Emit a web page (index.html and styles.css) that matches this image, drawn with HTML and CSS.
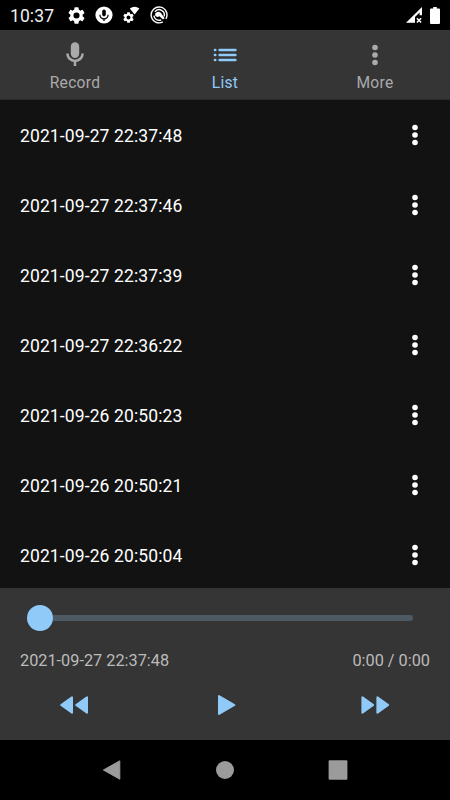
FILE: index.html
```html
<!DOCTYPE html>
<html lang="en">
<head>
<meta charset="utf-8">
<title>Recorder</title>
<link rel="stylesheet" href="styles.css">
</head>
<body>
<svg class="defs" width="0" height="0">
  <symbol id="gear" viewBox="2 2 20 20"><path d="M19.14 12.94c.04-.3.06-.61.06-.94s-.02-.64-.07-.94l2.03-1.58a.49.49 0 0 0 .12-.61l-1.92-3.32a.49.49 0 0 0-.59-.22l-2.39.96a7 7 0 0 0-1.62-.94l-.36-2.54A.48.48 0 0 0 13.92 2.4h-3.84a.48.48 0 0 0-.48.41l-.36 2.54c-.59.24-1.13.57-1.62.94l-2.39-.96a.49.49 0 0 0-.59.22L2.72 8.87a.48.48 0 0 0 .12.61l2.03 1.58a6 6 0 0 0 0 1.88l-2.03 1.58a.49.49 0 0 0-.12.61l1.92 3.32c.12.22.37.29.59.22l2.39-.96c.5.38 1.03.7 1.62.94l.36 2.54c.05.24.24.41.48.41h3.84c.24 0 .44-.17.47-.41l.36-2.54c.59-.24 1.13-.56 1.62-.94l2.39.96c.22.08.47 0 .59-.22l1.92-3.32a.48.48 0 0 0-.12-.61zM12 15.6a3.6 3.6 0 1 1 0-7.2 3.6 3.6 0 0 1 0 7.2z"/></symbol>
  <symbol id="dots" viewBox="0 0 8 22"><circle cx="4" cy="3.5" r="2.8"/><circle cx="4" cy="11" r="2.8"/><circle cx="4" cy="18.5" r="2.8"/></symbol>
</svg>
<div class="screen">
  <header class="status">
    <span class="clock">10:37</span>
    <svg class="s-gear" width="17" height="17"><use href="#gear"/></svg>
    <svg class="s-mic" width="18" height="18" viewBox="0 0 18 18"><circle cx="9" cy="9" r="8.6"/><rect class="ink" x="7.2" y="3.4" width="3.6" height="7" rx="1.8"/><path class="ink-line" d="M4.9 8.8a4.1 4.1 0 0 0 8.2 0M9 12.9v2"/></svg>
    <svg class="s-wifi" width="17" height="18" viewBox="0 0 17 18"><svg x="0" y="6" width="11" height="11"><use href="#gear"/></svg><path d="M6.8 2.5Q11.6-.9 16.4 2.5L11.6 8.4z"/></svg>
    <svg class="s-swirl" width="18" height="18" viewBox="0 0 18 18"><path class="ring" d="M12.8 15.9A7.9 7.9 0 1 1 15.9 12.9"/><path class="ring" d="M11.2 13.8A5.2 5.2 0 0 1 3.9 9.6M4.9 5.8A5.2 5.2 0 0 1 14 10.6"/><path d="M5.2 7.6Q8 4.2 11 7L14.6 12.2 13 13.6 9.4 10.2Q7 11.8 5.2 9.8z"/></svg>
    <svg class="s-signal" width="18" height="18" viewBox="0 0 18 18"><path d="M0 16.8 16 1v8.2h-2.4V6.5L9 11v5.8z"/><path class="cross" d="m10.9 12.3 4.2 4.2m0-4.2-4.2 4.2"/></svg>
    <svg class="s-battery" width="10" height="17" viewBox="0 0 10 17"><path d="M3.2 0h3.6v1.6H9q1 0 1 1V16q0 1-1 1H1q-1 0-1-1V2.6q0-1 1-1h2.2z"/></svg>
  </header>
  <nav class="tabs">
    <div class="tab"><svg width="24" height="28" viewBox="0 0 24 28"><rect x="7.8" y="2.2" width="8.4" height="15.8" rx="4.2"/><path class="mic-stand" d="M4.4 13.6a7.6 7.3 0 0 0 15.2 0M12 21v5"/></svg><span>Record</span></div>
    <div class="tab active"><svg width="24" height="28" viewBox="0 0 24 28"><path class="list-lines" d="M6.6 10H22.4M6.6 15H22.4M6.6 20H22.4M1.9 10h.4M1.9 15h.4M1.9 20h.4"/></svg><span>List</span></div>
    <div class="tab"><svg width="8" height="28" viewBox="0 -4 8 28"><use href="#dots" width="8" height="22"/></svg><span>More</span></div>
  </nav>
  <main class="list">
    <div class="row"><span>2021-09-27 22:37:48</span><svg width="8" height="22"><use href="#dots"/></svg></div>
    <div class="row"><span>2021-09-27 22:37:46</span><svg width="8" height="22"><use href="#dots"/></svg></div>
    <div class="row"><span>2021-09-27 22:37:39</span><svg width="8" height="22"><use href="#dots"/></svg></div>
    <div class="row"><span>2021-09-27 22:36:22</span><svg width="8" height="22"><use href="#dots"/></svg></div>
    <div class="row"><span>2021-09-26 20:50:23</span><svg width="8" height="22"><use href="#dots"/></svg></div>
    <div class="row"><span>2021-09-26 20:50:21</span><svg width="8" height="22"><use href="#dots"/></svg></div>
    <div class="row"><span>2021-09-26 20:50:04</span><svg width="8" height="22"><use href="#dots"/></svg></div>
  </main>
  <section class="player">
    <div class="slider"><span class="thumb"></span><span class="track"></span></div>
    <div class="meta"><span>2021-09-27 22:37:48</span><span class="time">0:00 / 0:00</span></div>
    <div class="controls">
      <svg width="32" height="24" viewBox="0 0 32 24"><path d="M2.2 12 13 4.3V19.7zM17.2 12 28 4.3V19.7z"/></svg>
      <svg width="32" height="24" viewBox="0 0 32 24"><path d="M10 3V21L25.4 12z"/></svg>
      <svg width="32" height="24" viewBox="0 0 32 24"><path d="M3.4 4.3V19.7L14.2 12zM18.4 4.3V19.7L29.2 12z"/></svg>
    </div>
  </section>
  <footer class="navbar">
    <svg width="24" height="24" viewBox="0 0 24 24"><path class="back" d="M2.4 12 18.8 2.8V21.2z"/></svg>
    <svg width="24" height="24" viewBox="0 0 24 24"><circle cx="12" cy="12" r="9"/></svg>
    <svg width="24" height="24" viewBox="0 0 24 24"><rect x="2.6" y="2.3" width="18.8" height="19.4" rx="1"/></svg>
  </footer>
</div>
</body>
</html>
```
FILE: styles.css
```css
* { box-sizing: border-box; }
body { margin: 0; background: #000; font-family: Roboto, sans-serif; }
svg { display: block; fill: currentColor; flex: none; }
.defs { position: absolute; }
.screen { width: 450px; height: 800px; display: flex; flex-direction: column; overflow: hidden; }
.status { height: 30px; background: #000; color: #fff; display: flex; align-items: center; padding: 0 10px; }
.clock { width: 58px; font-size: 17.5px; line-height: 30px; color: #eee; padding-top: 1px; letter-spacing: .1px; }
.s-mic { margin-left: 10px; }
.s-wifi { margin-left: 10px; }
.s-swirl { margin-left: 10px; }
.s-signal { margin-left: auto; }
.s-battery { margin-left: 6px; }
.ink { fill: #000; }
.ink-line { fill: none; stroke: #000; stroke-width: 1.3; }
.ring { fill: none; stroke: #fff; stroke-width: 1.4; }
.cross { fill: none; stroke: #fff; stroke-width: 1.5; }
.tabs { height: 70px; background: #353535; border-bottom: 1px solid #2b2b2b; display: flex; color: #aaa; }
.tab { flex: 1; display: flex; flex-direction: column; align-items: center; padding-top: 10px; font-size: 15.6px; letter-spacing: .3px; }
.tab span { line-height: 20px; margin-top: 5px; }
.tab.active { color: #90caf9; }
.mic-stand { fill: none; stroke: currentColor; stroke-width: 2.5; }
.list-lines { fill: none; stroke: currentColor; stroke-width: 2.5; stroke-linecap: round; }
.list { height: 488px; background: #121212; color: #fff; overflow: hidden; }
.row { height: 70px; display: flex; align-items: center; justify-content: space-between; padding: 0 31px 0 20px; font-size: 17.5px; letter-spacing: .12px; }
.row span { padding-top: 2px; }
.player { height: 152px; background: #353535; color: #bbb; }
.slider { height: 60px; display: flex; align-items: center; padding: 0 37px 0 27px; }
.thumb { width: 26px; height: 26px; border-radius: 50%; background: #90caf9; }
.track { flex: 1; height: 6px; background: #4d5a64; border-radius: 0 3px 3px 0; }
.meta { height: 24px; line-height: 26px; display: flex; justify-content: space-between; padding: 0 20px; font-size: 16.3px; }
.controls { height: 66px; display: grid; grid-template-columns: repeat(3, 1fr); justify-items: center; align-items: center; color: #90caf9; }
.controls path { stroke: currentColor; stroke-width: 2; stroke-linejoin: round; }
.navbar { height: 60px; background: #000; color: #9b9b9b; display: flex; align-items: center; justify-content: center; gap: 88.5px; }
.back { stroke: currentColor; stroke-width: 1; stroke-linejoin: round; }
```
